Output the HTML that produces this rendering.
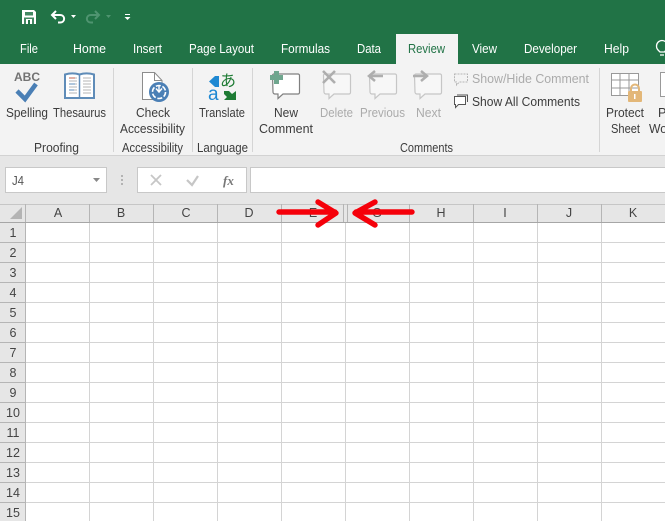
<!DOCTYPE html>
<html><head><meta charset="utf-8">
<style>
html,body{margin:0;padding:0;background:#fff;width:665px;height:521px;overflow:hidden}
svg{display:block}
text{font-family:"Liberation Sans",sans-serif;font-size:12.5px;fill:#3c3c3c}
.tab{fill:#fff;font-size:12.5px}
.dim{fill:#ababab}
.hd{fill:#444;font-size:12.5px}
</style></head><body>
<svg width="665" height="521" viewBox="0 0 665 521" xmlns="http://www.w3.org/2000/svg">
<!-- title / tabs -->
<rect width="665" height="64" fill="#217346"/>
<rect y="64" width="665" height="91" fill="#f3f3f3"/>
<rect y="155" width="665" height="1" fill="#d2d2d2"/>
<rect y="156" width="665" height="48" fill="#e6e6e6"/>
<rect x="396" y="34" width="62" height="30" fill="#f3f3f3"/>
<!-- QAT -->
<path d="M22 10h12l2 2v12H22z" fill="#fff"/>
<rect x="25" y="12" width="8" height="3.500" fill="#217346" opacity=".85"/>
<rect x="24" y="17.500" width="10" height="6.500" fill="#217346" opacity=".85"/>
<rect x="26" y="19" width="6" height="5" fill="#fff"/><rect x="28" y="20" width="2" height="4" fill="#217346"/>
<path d="M56 11l-4 4 4 4M52 15h8c5.500 0 5.500 7.500 0 7.500h-2" fill="none" stroke="#fff" stroke-width="2"/>
<path d="M71 15h5l-2.500 3z" fill="#fff"/>
<path d="M95 11l4 4-4 4M99 15h-8c-5.500 0-5.500 7.500 0 7.500h2" fill="none" stroke="#4f9470" stroke-width="2"/>
<path d="M106 15h5l-2.500 3z" fill="#4f9470"/>
<rect x="125" y="14" width="5" height="1" fill="#fff"/><path d="M124.500 17h6l-3 3z" fill="#fff"/>
<text class="tab" x="20" y="53" textLength="18" lengthAdjust="spacingAndGlyphs">File</text>
<text class="tab" x="73" y="53" textLength="33" lengthAdjust="spacingAndGlyphs">Home</text>
<text class="tab" x="133" y="53" textLength="29" lengthAdjust="spacingAndGlyphs">Insert</text>
<text class="tab" x="189" y="53" textLength="65" lengthAdjust="spacingAndGlyphs">Page Layout</text>
<text class="tab" x="281" y="53" textLength="49" lengthAdjust="spacingAndGlyphs">Formulas</text>
<text class="tab" x="357" y="53" textLength="24" lengthAdjust="spacingAndGlyphs">Data</text>
<text x="408" y="53" textLength="37" lengthAdjust="spacingAndGlyphs" style="fill:#217346">Review</text>
<text class="tab" x="472" y="53" textLength="25" lengthAdjust="spacingAndGlyphs">View</text>
<text class="tab" x="524" y="53" textLength="53" lengthAdjust="spacingAndGlyphs">Developer</text>
<text class="tab" x="604" y="53" textLength="25" lengthAdjust="spacingAndGlyphs">Help</text>
<path d="M660 52c-2-2-3.500-3-3.500-6a5.500 5.500 0 0 1 11 0c0 3-1.500 4-3 6zM660 55h4" fill="none" stroke="#fff" stroke-width="1.300"/>
<!-- ribbon separators -->
<g fill="#d5d5d5"><rect x="113" y="68" width="1" height="84"/><rect x="192" y="68" width="1" height="84"/><rect x="252" y="68" width="1" height="84"/><rect x="599" y="68" width="1" height="84"/></g>
<!-- Spelling -->
<text x="14" y="81" textLength="26" lengthAdjust="spacingAndGlyphs" style="font-size:12px;font-weight:bold;fill:#737373">ABC</text>
<path d="M17 91l8 8 11-15" fill="none" stroke="#4a7fb5" stroke-width="4.500"/>
<text x="6" y="117" textLength="42" lengthAdjust="spacingAndGlyphs">Spelling</text>
<!-- Thesaurus -->
<path d="M65 74.500c5-1.500 10-1.500 14.500 0c4.500-1.500 9.500-1.500 14.500 0V98H65z" fill="#fff" stroke="#5f8cb8" stroke-width="2"/>
<path d="M79.500 74v24" stroke="#5f8cb8" stroke-width="1.500"/>
<path d="M69 78h8M69 81h8M69 84h8M69 87h8M69 90h8M69 93h8M83 78h8M83 81h8M83 84h8M83 87h8M83 90h8M83 93h8" stroke="#b5b5b5" stroke-width="1"/>
<path d="M69 78h6" stroke="#c0604d" stroke-width="1"/><path d="M69 84h6M69 90h5" stroke="#5f8cb8" stroke-width="1"/>
<text x="53" y="117" textLength="53" lengthAdjust="spacingAndGlyphs">Thesaurus</text>
<!-- Check accessibility -->
<path d="M142.500 72.500h12l7.500 8v19h-19.500z" fill="#fff" stroke="#8c8c8c"/><path d="M154.500 72.500v8h7.500" fill="none" stroke="#8c8c8c"/>
<circle cx="159" cy="92" r="10" fill="#4a7fb5"/><circle cx="159" cy="92" r="6.500" fill="none" stroke="#fff" stroke-width="1.600" stroke-dasharray="5 1.800"/><path d="M159 85v6M156 88.500l3 3.500 3-3.500" stroke="#fff" stroke-width="1.400" fill="none"/>
<text x="136" y="117" textLength="34" lengthAdjust="spacingAndGlyphs">Check</text>
<text x="120" y="133" textLength="65" lengthAdjust="spacingAndGlyphs">Accessibility</text>
<!-- Translate -->
<path d="M209 81.500l6-5.500h4v11h-4z" fill="#1e88d2"/>
<text x="220" y="86" style="font-family:'Noto Sans CJK JP','Liberation Sans',sans-serif;font-size:16px;fill:#1e7b34">あ</text>
<text x="208" y="100" style="font-size:19px;fill:#1e88d2">a</text>
<path d="M236 100h-12l3-3-3-3v-3h5l3 3 4-3z" fill="#1e7b34"/>
<text x="199" y="117" textLength="46" lengthAdjust="spacingAndGlyphs">Translate</text>
<!-- New Comment -->
<path d="M272.500 75.500a1.500 1.500 0 0 1 1.500-1.500h24a1.500 1.500 0 0 1 1.500 1.500v17a1.500 1.500 0 0 1-1.500 1.500h-15l-5 4.500v-4.500h-3a2 2 0 0 1-2-2z" fill="#fff" stroke="#808080" stroke-width="1.200"/>
<path d="M274 71h5v4h4v5h-4v4h-5v-4h-4v-5h4z" fill="#6fa68e"/>
<text x="274" y="117" textLength="24" lengthAdjust="spacingAndGlyphs">New</text>
<text x="259" y="133" textLength="54" lengthAdjust="spacingAndGlyphs">Comment</text>
<!-- Delete -->
<path d="M323.500 75.500a1.500 1.500 0 0 1 1.500-1.500h24a1.500 1.500 0 0 1 1.500 1.500v17a1.500 1.500 0 0 1-1.500 1.500h-15l-5 4.500v-4.500h-3a2 2 0 0 1-2-2z" fill="#f7f7f7" stroke="#c6c6c6" stroke-width="1.200"/>
<path d="M323 71l12 12M335 71l-12 12" stroke="#aeaeae" stroke-width="2.600"/>
<text class="dim" x="320" y="117" textLength="33" lengthAdjust="spacingAndGlyphs">Delete</text>
<!-- Previous -->
<path d="M369.500 75.500a1.500 1.500 0 0 1 1.500-1.500h24a1.500 1.500 0 0 1 1.500 1.500v17a1.500 1.500 0 0 1-1.500 1.500h-15l-5 4.500v-4.500h-3a2 2 0 0 1-2-2z" fill="#f7f7f7" stroke="#c6c6c6" stroke-width="1.200"/>
<path d="M375 71l-6 5 6 5M369 76h14" fill="none" stroke="#aeaeae" stroke-width="2.500"/>
<text class="dim" x="360" y="117" textLength="45" lengthAdjust="spacingAndGlyphs">Previous</text>
<!-- Next -->
<path d="M414.500 75.500a1.500 1.500 0 0 1 1.500-1.500h24a1.500 1.500 0 0 1 1.500 1.500v17a1.500 1.500 0 0 1-1.500 1.500h-15l-5 4.500v-4.500h-3a2 2 0 0 1-2-2z" fill="#f7f7f7" stroke="#c6c6c6" stroke-width="1.200"/>
<path d="M421 71l6 5-6 5M427 76h-14" fill="none" stroke="#aeaeae" stroke-width="2.500"/>
<text class="dim" x="416" y="117" textLength="25" lengthAdjust="spacingAndGlyphs">Next</text>
<!-- Show/hide -->
<path d="M454.500 74h13v8h-8l-3 3v-3h-2z" fill="none" stroke="#b5b5b5" stroke-dasharray="2 1"/>
<text class="dim" x="472" y="83" textLength="117" lengthAdjust="spacingAndGlyphs">Show/Hide Comment</text>
<path d="M454.500 96.500h11v8h-7l-3 3v-3h-1z" fill="#fff" stroke="#555"/><path d="M457 95h10.500v7" fill="none" stroke="#555"/>
<text x="472" y="106" textLength="108" lengthAdjust="spacingAndGlyphs">Show All Comments</text>
<!-- Protect -->
<path d="M611.500 73.500h27v22h-27zM611 80h27M611 88h27M620 73v23M629 73v23" fill="#fff" stroke="#999"/>
<rect x="628" y="91" width="14" height="11" rx="1" fill="#e3b778"/>
<path d="M631 91v-2.500a4 4 0 0 1 8 0V91" fill="none" stroke="#e3b778" stroke-width="2"/><rect x="634" y="94" width="1.500" height="5" fill="#fff"/>
<text x="606" y="117" textLength="38" lengthAdjust="spacingAndGlyphs">Protect</text>
<text x="611" y="133" textLength="29" lengthAdjust="spacingAndGlyphs">Sheet</text>
<path d="M660.500 72.500h6v24h-6z" fill="#fff" stroke="#999"/>
<text x="658" y="117">P</text>
<text x="649" y="133" textLength="18" lengthAdjust="spacingAndGlyphs">Wo</text>
<!-- group labels -->
<text x="34" y="152" textLength="45" lengthAdjust="spacingAndGlyphs">Proofing</text>
<text x="122" y="152" textLength="61" lengthAdjust="spacingAndGlyphs">Accessibility</text>
<text x="197" y="152" textLength="51" lengthAdjust="spacingAndGlyphs">Language</text>
<text x="400" y="152" textLength="53" lengthAdjust="spacingAndGlyphs">Comments</text>
<!-- formula bar -->
<rect x="5.500" y="167.500" width="101" height="25" fill="#fff" stroke="#c8c8c8"/>
<text x="12" y="185" textLength="12" lengthAdjust="spacingAndGlyphs" style="fill:#555;font-size:13px">J4</text>
<path d="M93 178h7l-3.500 4z" fill="#888"/>
<g fill="#b3b3b3"><rect x="121" y="175" width="2" height="2"/><rect x="121" y="179" width="2" height="2"/><rect x="121" y="183" width="2" height="2"/></g>
<rect x="137.500" y="167.500" width="109" height="25" fill="#fff" stroke="#c8c8c8"/>
<path d="M151 175l10 10M161 175l-10 10" stroke="#c6c6c6" stroke-width="1.800"/>
<path d="M187 180l5 5 6-9" fill="none" stroke="#c6c6c6" stroke-width="2.200"/>
<text x="223" y="185" style="font-family:'Liberation Serif',serif;font-style:italic;font-weight:bold;font-size:13px;fill:#777">fx</text>
<rect x="250.500" y="167.500" width="416" height="25" fill="#fff" stroke="#c8c8c8"/>
<!-- grid -->
<rect y="204" width="665" height="18" fill="#e6e6e6"/>
<rect y="222" width="26" height="299" fill="#e6e6e6"/>
<rect y="204" width="665" height="1" fill="#c6c6c6"/>
<path d="M10 219h12v-12z" fill="#b4b4b4"/>
<g fill="#d4d4d4">
<rect x="89" y="222" width="1" height="299"/><rect x="153" y="222" width="1" height="299"/><rect x="217" y="222" width="1" height="299"/><rect x="281" y="222" width="1" height="299"/><rect x="345" y="222" width="1" height="299"/><rect x="409" y="222" width="1" height="299"/><rect x="473" y="222" width="1" height="299"/><rect x="537" y="222" width="1" height="299"/><rect x="601" y="222" width="1" height="299"/>
<rect x="26" y="242" width="639" height="1"/><rect x="26" y="262" width="639" height="1"/><rect x="26" y="282" width="639" height="1"/><rect x="26" y="302" width="639" height="1"/><rect x="26" y="322" width="639" height="1"/><rect x="26" y="342" width="639" height="1"/><rect x="26" y="362" width="639" height="1"/><rect x="26" y="382" width="639" height="1"/><rect x="26" y="402" width="639" height="1"/><rect x="26" y="422" width="639" height="1"/><rect x="26" y="442" width="639" height="1"/><rect x="26" y="462" width="639" height="1"/><rect x="26" y="482" width="639" height="1"/><rect x="26" y="502" width="639" height="1"/>
</g>
<g fill="#b5b5b5">
<rect x="0" y="242" width="26" height="1"/><rect x="0" y="262" width="26" height="1"/><rect x="0" y="282" width="26" height="1"/><rect x="0" y="302" width="26" height="1"/><rect x="0" y="322" width="26" height="1"/><rect x="0" y="342" width="26" height="1"/><rect x="0" y="362" width="26" height="1"/><rect x="0" y="382" width="26" height="1"/><rect x="0" y="402" width="26" height="1"/><rect x="0" y="422" width="26" height="1"/><rect x="0" y="442" width="26" height="1"/><rect x="0" y="462" width="26" height="1"/><rect x="0" y="482" width="26" height="1"/><rect x="0" y="502" width="26" height="1"/>
<rect x="25" y="204" width="1" height="317"/>
<rect x="89" y="204" width="1" height="18"/><rect x="153" y="204" width="1" height="18"/><rect x="217" y="204" width="1" height="18"/><rect x="281" y="204" width="1" height="18"/><rect x="343" y="204" width="1" height="18"/><rect x="347" y="204" width="1" height="18"/><rect x="409" y="204" width="1" height="18"/><rect x="473" y="204" width="1" height="18"/><rect x="537" y="204" width="1" height="18"/><rect x="601" y="204" width="1" height="18"/>
</g>
<rect y="222" width="665" height="1" fill="#a6a6a6"/>
<g text-anchor="middle">
<text class="hd" x="58" y="217">A</text><text class="hd" x="121" y="217">B</text><text class="hd" x="186" y="217">C</text><text class="hd" x="249" y="217">D</text><text class="hd" x="313" y="217">E</text><text class="hd" x="377" y="217">G</text><text class="hd" x="441" y="217">H</text><text class="hd" x="505" y="217">I</text><text class="hd" x="569" y="217">J</text><text class="hd" x="633" y="217">K</text>
<text class="hd" x="13" y="237">1</text><text class="hd" x="13" y="257">2</text><text class="hd" x="13" y="277">3</text><text class="hd" x="13" y="297">4</text><text class="hd" x="13" y="317">5</text><text class="hd" x="13" y="337">6</text><text class="hd" x="13" y="357">7</text><text class="hd" x="13" y="377">8</text><text class="hd" x="13" y="397">9</text><text class="hd" x="13" y="417">10</text><text class="hd" x="13" y="437">11</text><text class="hd" x="13" y="457">12</text><text class="hd" x="13" y="477">13</text><text class="hd" x="13" y="497">14</text><text class="hd" x="13" y="517">15</text>
</g>
<!-- red arrows -->
<g fill="none" stroke="#f5000a" stroke-width="5.400" stroke-linecap="round" stroke-linejoin="round">
<path d="M279 212h56M318 202l18 11-18 12"/>
<path d="M412 212h-56M375 202l-20 11 20 12"/>
</g>
</svg>
</body></html>
